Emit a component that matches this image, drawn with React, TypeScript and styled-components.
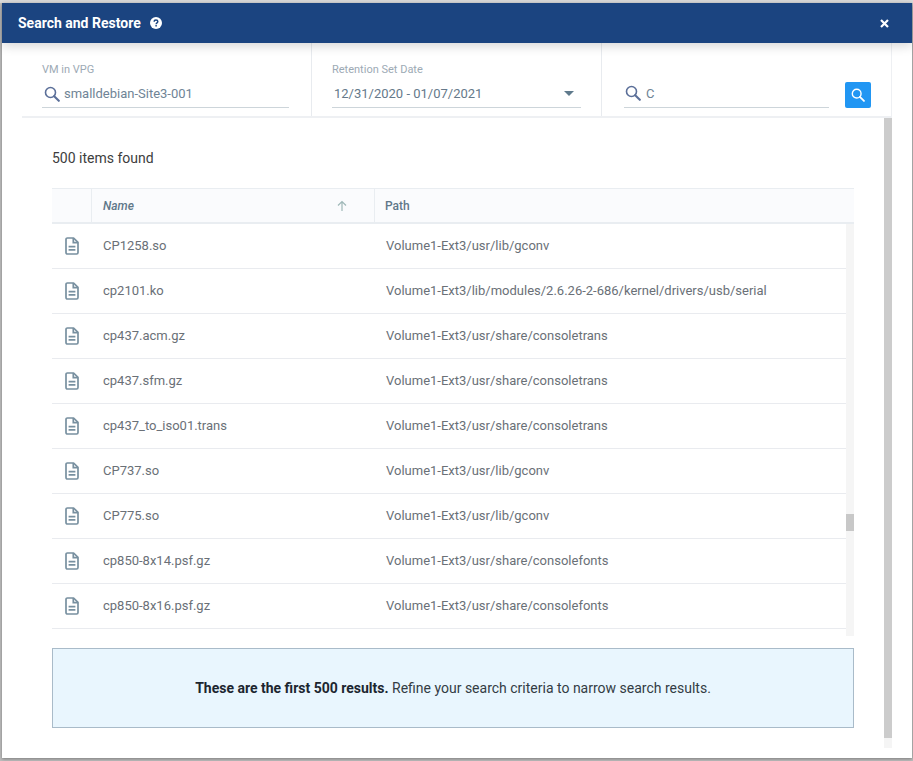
import React from "react";
import styled, { createGlobalStyle } from "styled-components";

const Global = createGlobalStyle`
  html, body { margin: 0; padding: 0; background: #c9c9c9; }
  body { font-family: Roboto, "Liberation Sans", sans-serif; width: 913px; height: 761px; overflow: hidden; }
  * { box-sizing: border-box; }
`;

const Backdrop = styled.div`
  width: 913px;
  height: 761px;
  padding: 3px 1px 3px 2px;
  background: linear-gradient(#dcdcdc 0, #dcdcdc 3px, #bdbdbd 3px);
`;

const Dialog = styled.div`
  width: 910px;
  height: 755px;
  background: #fff;
  display: flex;
  flex-direction: column;
  box-shadow: 0 1px 3px rgba(0, 0, 0, 0.35);
`;

const Header = styled.header`
  height: 40px;
  flex: none;
  background: #1b4480;
  color: #fff;
  display: flex;
  align-items: center;
  justify-content: space-between;
  padding: 0 23px 0 16px;
  box-shadow: 0 3px 10px rgba(0, 0, 0, 0.16);
  position: relative;
  z-index: 2;
`;

const TitleGroup = styled.div`
  display: flex;
  align-items: center;
  gap: 9px;
`;

const Title = styled.h1`
  margin: 0;
  font-size: 14px;
  font-weight: 700;
  line-height: 20px;
`;

const HeaderIcon = styled.svg`
  display: block;
`;

const Body = styled.div`
  flex: 1;
  min-height: 0;
  padding: 0 20px 10px;
  display: flex;
  flex-direction: column;
`;

const FilterBar = styled.div`
  height: 75px;
  flex: none;
  display: grid;
  grid-template-columns: 290px 290px 1fr;
  border-bottom: 2px solid #eef0f3;
  border-right: 1px solid #eef0f3;
`;

const FilterCell = styled.div<{ $divider?: boolean; $right?: number; $left?: number }>`
  padding: 0 ${(p) => p.$right ?? 22}px 8px ${(p) => p.$left ?? 20}px;
  display: flex;
  align-items: flex-end;
  gap: 16px;
  ${(p) => (p.$divider ? "border-right: 1px solid #e8ebef;" : "")}
`;

const Field = styled.div`
  flex: 1;
  min-width: 0;
`;

const FieldLabel = styled.div`
  font-size: 11px;
  line-height: 13px;
  color: #9daab5;
  margin-bottom: 4px;
`;

const FieldInput = styled.div<{ $tight?: boolean }>`
  height: 28px;
  border-bottom: 1px solid #cdd5da;
  display: flex;
  align-items: center;
  gap: ${(p) => (p.$tight ? "5px" : "4px")};
  padding-left: ${(p) => (p.$tight ? "1px" : "2px")};
  font-size: 13px;
  color: #6f8496;
`;

const RaisedIcon = styled.span`
  display: flex;
  margin-top: -2px;
`;

const DateValue = styled.span`
  flex: 1;
  color: #65798a;
`;

const Caret = styled.span`
  width: 0;
  height: 0;
  border-left: 5px solid transparent;
  border-right: 5px solid transparent;
  border-top: 5px solid #5f7a8c;
  margin-right: 7px;
`;

const SearchButton = styled.button`
  width: 26px;
  height: 26px;
  border: 0;
  padding: 0;
  border-radius: 2px;
  background: #2196f3;
  display: flex;
  align-items: center;
  justify-content: center;
`;

const Split = styled.div`
  flex: 1;
  min-height: 0;
  display: flex;
`;

const Content = styled.div`
  flex: 1;
  min-width: 0;
  padding: 0 30px;
`;

const PageTrack = styled.div`
  width: 8px;
  flex: none;
  background: linear-gradient(#cccccc 0 620px, #f5f5f5 620px);
`;

const Count = styled.div`
  height: 70px;
  padding-top: 32px;
  font-size: 14px;
  line-height: 16px;
  color: #3d3d3d;
`;

const HeaderRow = styled.div`
  height: 36px;
  display: grid;
  grid-template-columns: 39px 283px 1fr;
  background: #fafbfd;
  border-top: 1px solid #e9edf1;
  border-bottom: 2px solid #e9edf1;
`;

const HeaderCell = styled.div<{ $italic?: boolean; $line?: boolean; $left?: number }>`
  display: flex;
  align-items: center;
  justify-content: space-between;
  padding: 0 26px 0 ${(p) => p.$left ?? 11}px;
  font-size: 12px;
  font-weight: 500;
  color: #5f7789;
  font-style: ${(p) => (p.$italic ? "italic" : "normal")};
  ${(p) => (p.$line ? "border-left: 1px solid #e9edf1;" : "")}
`;

const TableBody = styled.div`
  display: flex;
  height: 412px;
`;

const Rows = styled.div`
  flex: 1;
  min-width: 0;
`;

const Row = styled.div`
  height: 45px;
  display: grid;
  grid-template-columns: 39px 283px 1fr;
  align-items: center;
  border-bottom: 1px solid #e9ebef;
  font-size: 13px;
  color: #6a7077;
  padding-bottom: 1px;
`;

const IconCell = styled.div`
  display: flex;
  justify-content: center;
  padding-left: 1px;
`;

const NameCell = styled.div`
  padding-left: 12px;
`;

const PathCell = styled.div`
  padding-left: 12px;
`;

const InnerTrack = styled.div`
  width: 8px;
  flex: none;
  background: #f5f5f5;
  padding-top: 290px;
`;

const InnerThumb = styled.div`
  height: 17px;
  background: #c8c8c8;
`;

const Notice = styled.div`
  height: 80px;
  margin-top: 12px;
  background: #e9f6fe;
  border: 1px solid #a9bbc9;
  display: flex;
  align-items: center;
  justify-content: center;
  font-size: 14px;
  color: #333c44;
  b {
    font-weight: 700;
    color: #1c2630;
  }
`;

const SearchIcon = ({ size = 16, color = "#5b6f99" }: { size?: number; color?: string }) => (
  <svg width={size} height={size} viewBox="0 0 16 16" fill="none" stroke={color}>
    <circle cx="6.5" cy="6.5" r="5" strokeWidth="1.6" />
    <path d="M10.2 10.2l4.6 4.6" strokeWidth="2.1" strokeLinecap="round" />
  </svg>
);

const FileIcon = () => (
  <svg width="14" height="18" viewBox="0 0 14 18" fill="none" stroke="#7890a0" strokeWidth="1.7">
    <path d="M1 2.4C1 1.6 1.6 1 2.4 1H8.6L13 5.4V15.6C13 16.4 12.4 17 11.6 17H2.4C1.6 17 1 16.4 1 15.6Z" strokeLinejoin="round" />
    <path d="M8.3 1V5.7H13" />
    <path d="M3.6 9.6H10.4M3.6 12.8H10.4" />
  </svg>
);

const rows = [
  ["CP1258.so", "Volume1-Ext3/usr/lib/gconv"],
  ["cp2101.ko", "Volume1-Ext3/lib/modules/2.6.26-2-686/kernel/drivers/usb/serial"],
  ["cp437.acm.gz", "Volume1-Ext3/usr/share/consoletrans"],
  ["cp437.sfm.gz", "Volume1-Ext3/usr/share/consoletrans"],
  ["cp437_to_iso01.trans", "Volume1-Ext3/usr/share/consoletrans"],
  ["CP737.so", "Volume1-Ext3/usr/lib/gconv"],
  ["CP775.so", "Volume1-Ext3/usr/lib/gconv"],
  ["cp850-8x14.psf.gz", "Volume1-Ext3/usr/share/consolefonts"],
  ["cp850-8x16.psf.gz", "Volume1-Ext3/usr/share/consolefonts"],
];

export default function App() {
  return (
    <Backdrop>
      <Global />
      <Dialog>
        <Header>
          <TitleGroup>
            <Title>Search and Restore</Title>
            <HeaderIcon width="12" height="12" viewBox="0 0 13 13">
              <circle cx="6.5" cy="6.5" r="6.5" fill="#fff" />
              <path d="M4.5 5.1C4.5 3.9 5.4 3.2 6.5 3.2S8.5 3.9 8.5 5C8.5 6.3 6.6 6.4 6.6 7.8" fill="none" stroke="#1b4480" strokeWidth="1.5" />
              <rect x="5.8" y="8.7" width="1.6" height="1.6" fill="#1b4480" />
            </HeaderIcon>
          </TitleGroup>
          <HeaderIcon width="9" height="9" viewBox="0 0 9 9">
            <path d="M1 1L8 8M8 1L1 8" stroke="#fff" strokeWidth="2.2" />
          </HeaderIcon>
        </Header>
        <Body>
          <FilterBar>
            <FilterCell $divider>
              <Field>
                <FieldLabel>VM in VPG</FieldLabel>
                <FieldInput>
                  <SearchIcon />
                  <span>smalldebian-Site3-001</span>
                </FieldInput>
              </Field>
            </FilterCell>
            <FilterCell $divider $right={20}>
              <Field>
                <FieldLabel>Retention Set Date</FieldLabel>
                <FieldInput>
                  <DateValue>12/31/2020 - 01/07/2021</DateValue>
                  <Caret />
                </FieldInput>
              </Field>
            </FilterCell>
            <FilterCell $left={22} $right={20}>
              <Field>
                <FieldInput $tight>
                  <RaisedIcon>
                    <SearchIcon />
                  </RaisedIcon>
                  <span>C</span>
                </FieldInput>
              </Field>
              <SearchButton aria-label="Search">
                <SearchIcon size={14} color="#fff" />
              </SearchButton>
            </FilterCell>
          </FilterBar>
          <Split>
            <Content>
              <Count>500 items found</Count>
              <HeaderRow>
                <HeaderCell />
                <HeaderCell $italic $line>
                  <span>Name</span>
                  <svg width="12" height="12" viewBox="0 0 12 12" fill="none" stroke="#9fb8b8" strokeWidth="1.2">
                    <path d="M6 11V1.5M2 5.5L6 1.5L10 5.5" />
                  </svg>
                </HeaderCell>
                <HeaderCell $line $left={10}>Path</HeaderCell>
              </HeaderRow>
              <TableBody>
                <Rows>
                  {rows.map(([name, path]) => (
                    <Row key={name}>
                      <IconCell>
                        <FileIcon />
                      </IconCell>
                      <NameCell>{name}</NameCell>
                      <PathCell>{path}</PathCell>
                    </Row>
                  ))}
                </Rows>
                <InnerTrack>
                  <InnerThumb />
                </InnerTrack>
              </TableBody>
              <Notice>
                <span>
                  <b>These are the first 500 results.</b> Refine your search criteria to narrow search results.
                </span>
              </Notice>
            </Content>
            <PageTrack />
          </Split>
        </Body>
      </Dialog>
    </Backdrop>
  );
}
